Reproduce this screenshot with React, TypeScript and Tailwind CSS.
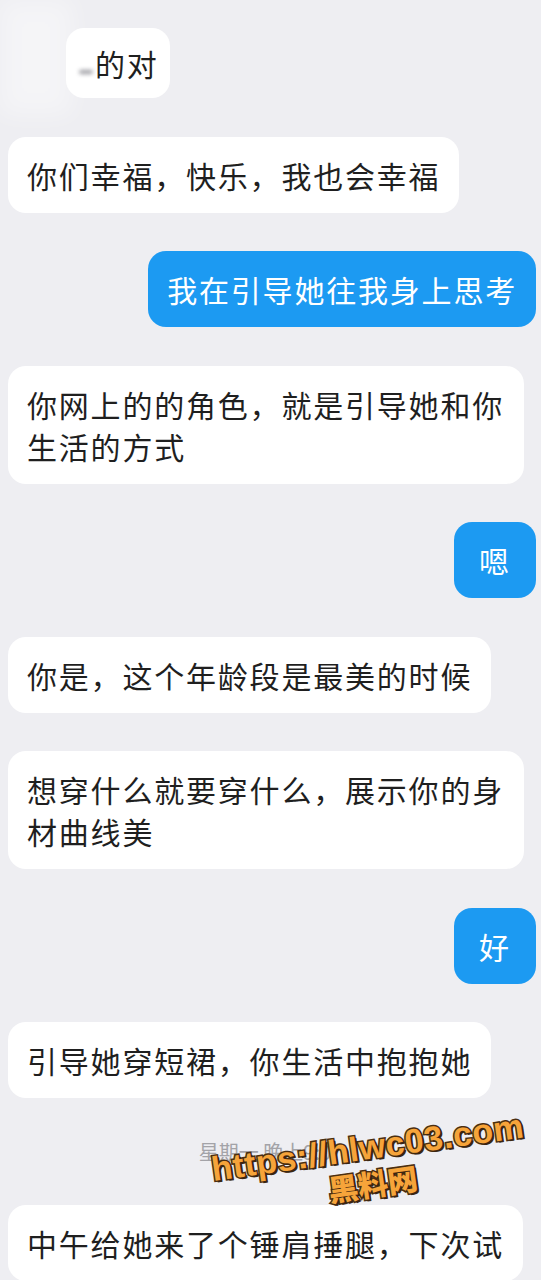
const messages: { id: number; mine?: boolean; text: string; minW?: boolean }[] = [
  { id: 2, text: "你们幸福，快乐，我也会幸福" },
  { id: 3, mine: true, text: "我在引导她往我身上思考" },
  { id: 4, text: "你网上的的角色，就是引导她和你生活的方式" },
  { id: 5, mine: true, text: "嗯", minW: true },
  { id: 6, text: "你是，这个年龄段是最美的时候" },
  { id: 7, text: "想穿什么就要穿什么，展示你的身材曲线美" },
  { id: 8, mine: true, text: "好", minW: true },
  { id: 9, text: "引导她穿短裙，你生活中抱抱她" },
];

const font = { fontFamily: '"Noto Sans CJK SC", "Noto Sans", sans-serif' };

function Bubble({ mine, text, minW }: { mine?: boolean; text: string; minW?: boolean }) {
  return (
    <div className={mine ? "flex justify-end pr-[5px]" : "flex justify-start pl-[8px]"}>
      <div
        className={
          "max-w-[516px] rounded-[18px] px-[19px] py-[17px] text-[30px] leading-[42px] tracking-[1.8px] " +
          (mine ? "bg-[#1c9af2] text-white" : "bg-white text-[#1f1f1f]") +
          (minW ? " min-w-[82px] text-center" : "")
        }
      >
        {text}
      </div>
    </div>
  );
}

export default function App() {
  return (
    <div className="relative h-[1280px] w-[541px] overflow-hidden bg-[#eeeef2]" style={font}>
      {/* blurred redaction top-left */}
      <div className="absolute left-0 top-0 h-[115px] w-[72px] bg-white/40 blur-md" />

      <div className="flex flex-col gap-[38.5px] pt-[28px]">
        <div className="flex pl-[66px]">
          <div className="flex items-center rounded-[18px] bg-white py-[14px] pl-[13px] pr-[11px] text-[30px] leading-[42px] tracking-[1.8px] text-[#1f1f1f]">
            <span className="mr-[2px] mt-[18px] inline-block h-[4px] w-[14px] rounded-full bg-[#9a9aa0] blur-[2px]" />
            <span>的对</span>
          </div>
        </div>

        {messages.map((m) => (
          <Bubble key={m.id} mine={m.mine} text={m.text} minW={m.minW} />
        ))}

        <div className="h-[30px] text-center text-[20px] leading-[30px] text-[#a3a3a8]">
          星期一 晚上9:07
        </div>

        <Bubble text="中午给她来了个锤肩捶腿，下次试" />
      </div>

      {/* watermark */}
      <div
        className="absolute left-[200px] top-[1130px] flex w-[340px] -rotate-[8deg] flex-col items-center font-black leading-none text-[#f6a43a]"
        style={{
          fontFamily: '"Liberation Sans", "Noto Sans CJK SC", sans-serif',
          WebkitTextStroke: "3px #4a2e12",
          paintOrder: "stroke fill",
          textShadow: "2px 2px 0 #3b2610",
        }}
      >
        <span className="text-[34px] tracking-[0.5px]">https://hlwc03.com</span>
        <span className="mt-[4px] text-[30px]" style={{ fontFamily: '"Noto Sans CJK SC", sans-serif' }}>
          黑料网
        </span>
      </div>
    </div>
  );
}
